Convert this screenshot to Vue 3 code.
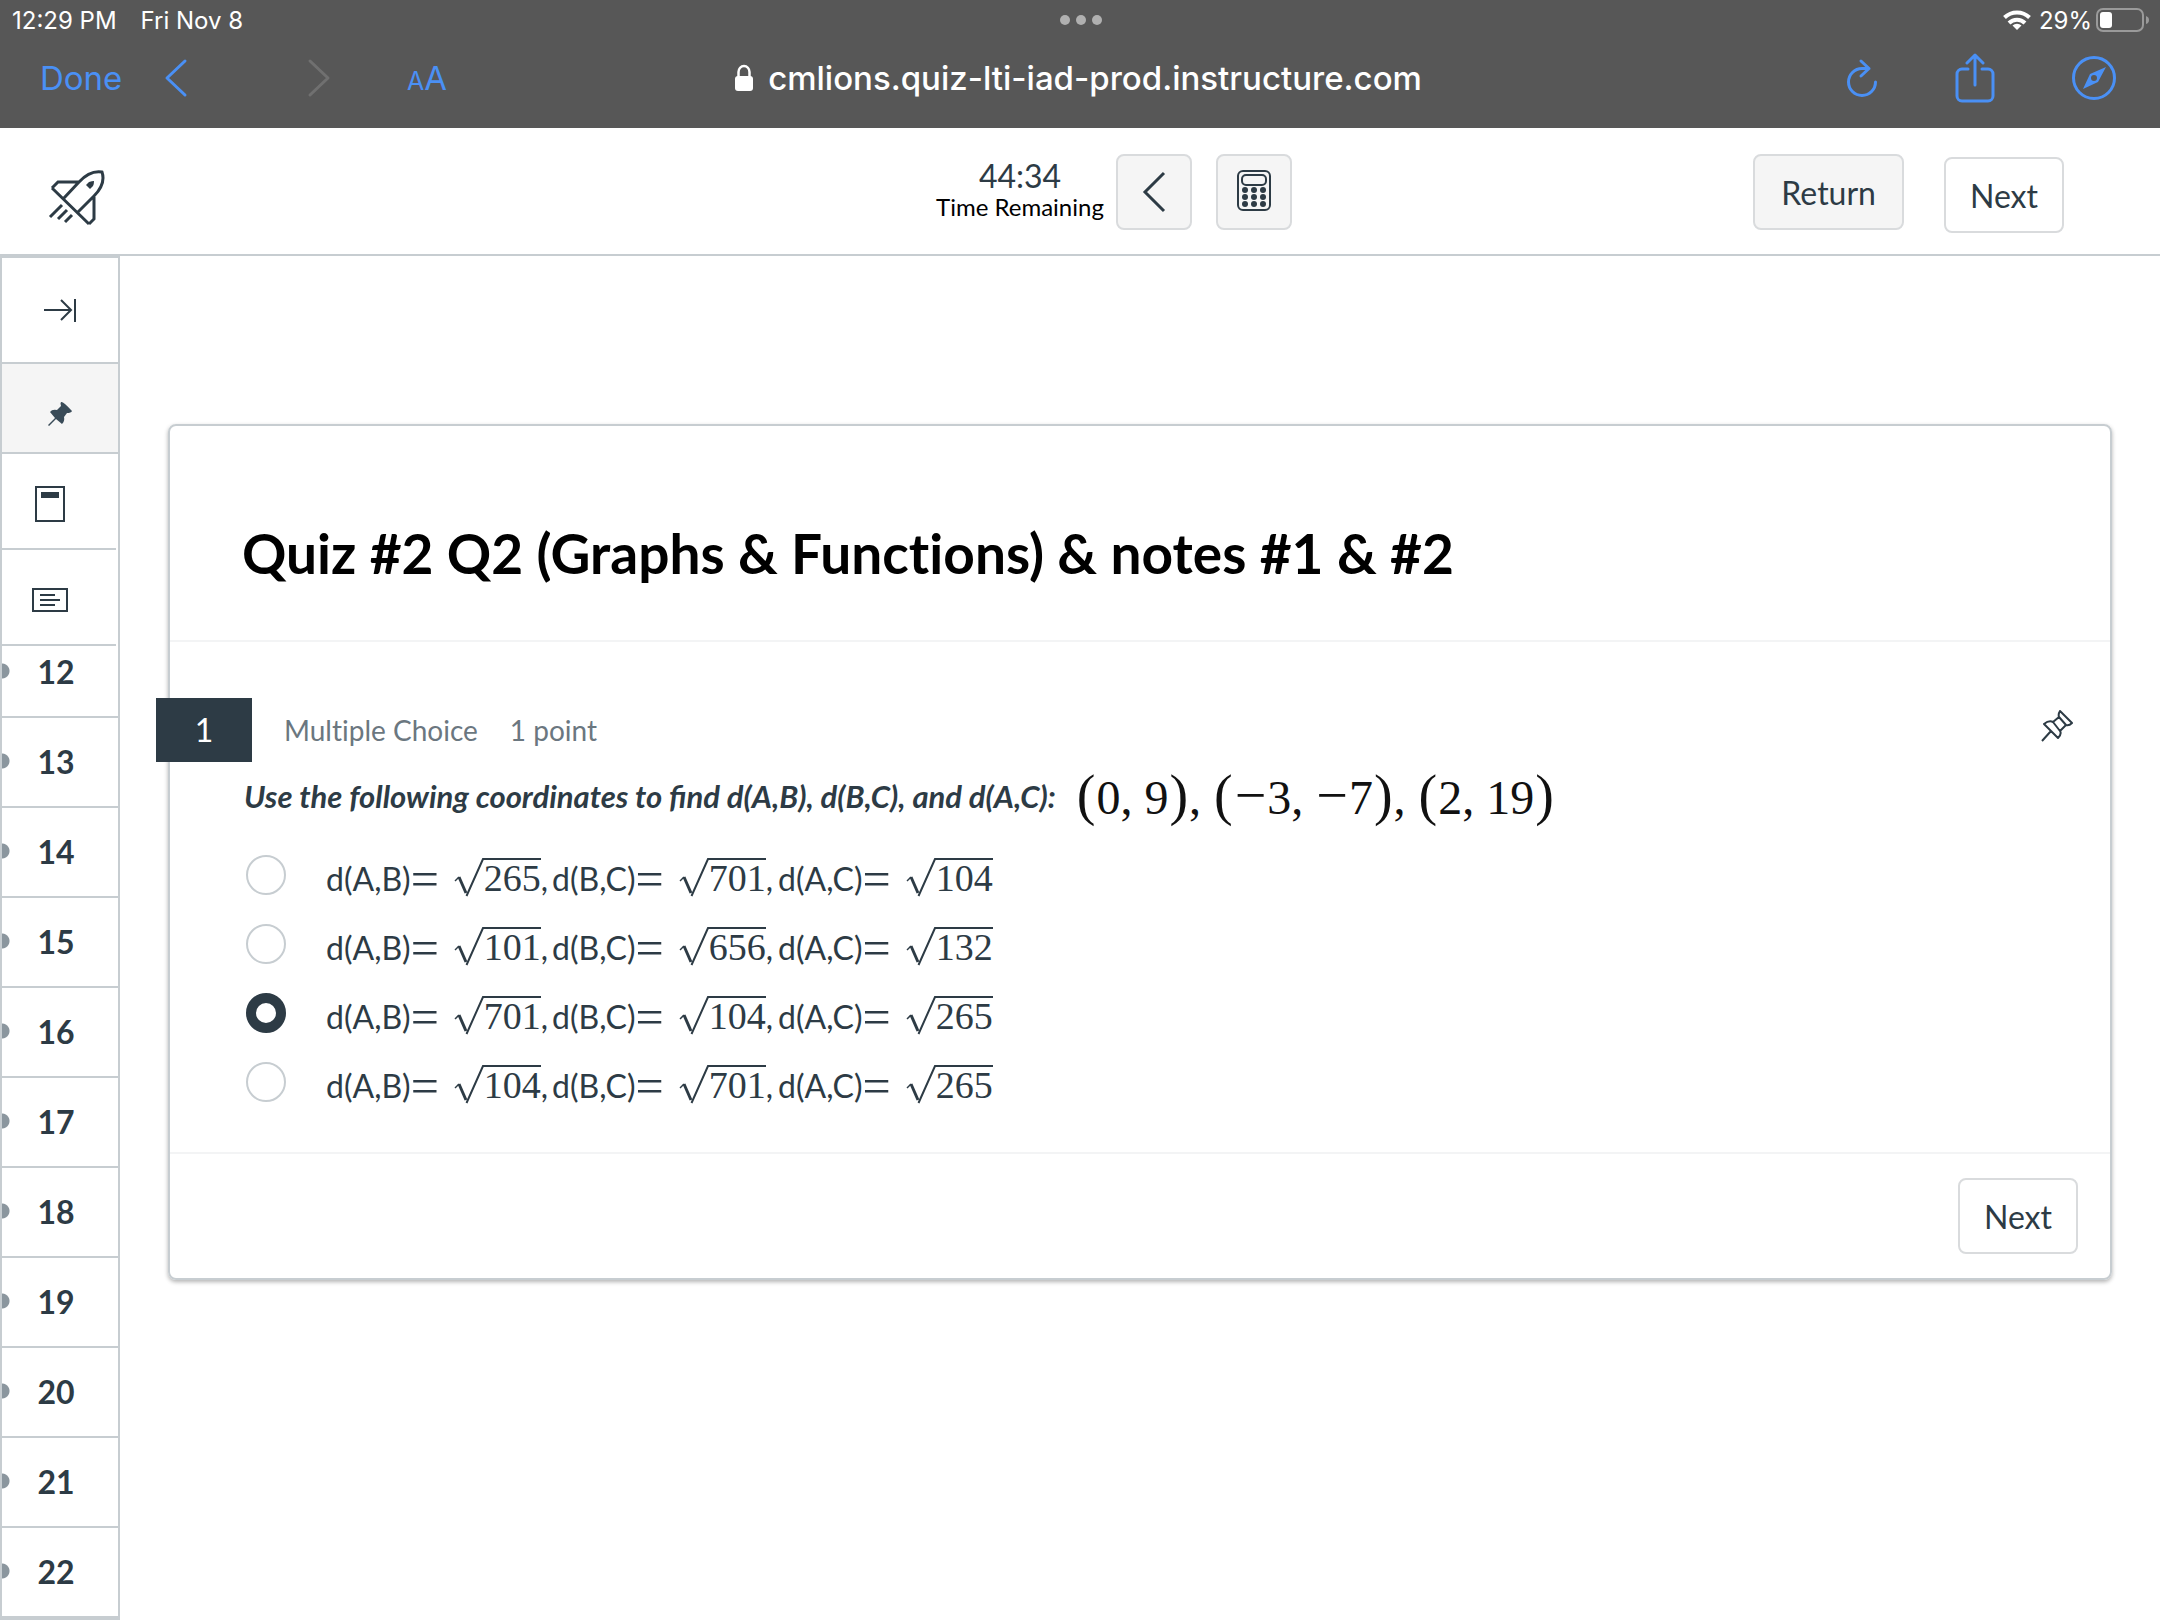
<script setup>
import { ref } from 'vue'

const choice = ref(2)
const questions = [12, 13, 14, 15, 16, 17, 18, 19, 20, 21, 22]
const answers = [
  [265, 701, 104],
  [101, 656, 132],
  [701, 104, 265],
  [104, 701, 265],
].map((roots) => ['d(A,B)', 'd(B,C)', 'd(A,C)'].map((name, i) => ({ name, root: roots[i] })))
const keys = [0, 1, 2].flatMap((r) => [0, 1, 2].map((c) => ({ x: 11 + c * 9, y: 20 + r * 7 })))
</script>

<template>
  <div class="page">
    <div class="browser">
      <div class="status">
        <div class="side">
          <span>12:29 PM</span>
          <span>Fri Nov 8</span>
        </div>
        <div class="dots"><i></i><i></i><i></i></div>
        <div class="side end">
          <svg width="28" height="22" viewBox="0 0 28 22" fill="none" stroke="#fff" stroke-width="4">
            <path d="M1.5 8.5a18 18 0 0 1 25 0M6 14a11.500 11.500 0 0 1 16 0" />
            <path d="M14 21l-4.500-4.500a6.500 6.500 0 0 1 9 0z" fill="#fff" stroke="none" />
          </svg>
          <span class="charge">29%</span>
          <svg width="54" height="24" viewBox="0 0 54 24">
            <rect x="1" y="1" width="46" height="22" rx="6" fill="none" stroke="#9a9a9a" stroke-width="2" />
            <rect x="4" y="4" width="12" height="16" rx="3" fill="#fff" />
            <path d="M50 8q3 1 3 4t-3 4z" fill="#9a9a9a" />
          </svg>
        </div>
      </div>
      <div class="toolbar">
        <div class="tools">
          <button class="plain done">Done</button>
          <button class="plain back" aria-label="Back">
            <svg width="24" height="40" viewBox="0 0 24 40" fill="none" stroke="#4a90f5" stroke-width="3" stroke-linecap="round" stroke-linejoin="round"><path d="M21 3L3 20l18 17" /></svg>
          </button>
          <button class="plain forward" aria-label="Forward">
            <svg width="24" height="40" viewBox="0 0 24 40" fill="none" stroke="#707070" stroke-width="3" stroke-linecap="round" stroke-linejoin="round"><path d="M3 3l18 17L3 37" /></svg>
          </button>
          <button class="plain size"><small>A</small>A</button>
        </div>
        <div class="address">
          <svg width="20" height="28" viewBox="0 0 20 28"><path d="M4.500 13V8a5.500 6 0 0 1 11 0v5" fill="none" stroke="#fff" stroke-width="2.500" /><rect x="1" y="12" width="18" height="15" rx="3" fill="#fff" /></svg>
          <span>cmlions.quiz-lti-iad-prod.instructure.com</span>
        </div>
        <div class="tools end">
          <button class="plain" aria-label="Reload">
            <svg width="32" height="40" viewBox="0 0 32 40" fill="none" stroke="#4a90f5" stroke-width="3" stroke-linecap="round" stroke-linejoin="round"><path d="M29.500 24A13.500 13.500 0 1 1 16 10.500h7M15 3l8 7.500-8 7.500" /></svg>
          </button>
          <button class="plain" aria-label="Share">
            <svg width="40" height="50" viewBox="0 0 40 50" fill="none" stroke="#4a90f5" stroke-width="3" stroke-linecap="round" stroke-linejoin="round"><path d="M13 16H7a5 5 0 0 0-5 5v22a5 5 0 0 0 5 5h26a5 5 0 0 0 5-5V21a5 5 0 0 0-5-5h-6M20 32V3M12 10l8-8 8 8" /></svg>
          </button>
          <button class="plain" aria-label="Open in browser">
            <svg width="44" height="44" viewBox="0 0 44 44"><circle cx="22" cy="22" r="20.500" fill="none" stroke="#4a90f5" stroke-width="3" /><path fill="#4a90f5" fill-rule="evenodd" d="M34 11L26 26 11 33l7-15zM22 19a3 3 0 1 0 0 6 3 3 0 0 0 0-6z" /></svg>
          </button>
        </div>
      </div>
    </div>

    <header class="header">
      <div class="brand">
        <svg width="58" height="58" viewBox="0 0 58 58" fill="none" stroke="#2d3b45" stroke-width="3">
          <path d="M16 30L31 14Q42 2 54 4Q58 16 46 28L30 44M4 20l37 36M4 20l6-6h21M41 56l5-5V29M2 49l12-12M10 51l9-9M17 54l7-7" />
          <path d="M38 17l3-3q3-1 5-1 0 3-1 5l-3 3z" fill="#2d3b45" stroke="none" />
        </svg>
      </div>
      <div class="center">
        <div class="timer"><strong>44:34</strong><span>Time Remaining</span></div>
        <button class="btn grey square" aria-label="Hide timer">
          <svg width="24" height="42" viewBox="0 0 24 42" fill="none" stroke="#2d3b45" stroke-width="3"><path d="M22 2L3 21l19 19" /></svg>
        </button>
        <button class="btn grey square" aria-label="Calculator">
          <svg width="40" height="44" viewBox="0 0 40 44" fill="none" stroke="#2d3b45" stroke-width="2">
            <rect x="4" y="1" width="32" height="39" rx="5" /><rect x="8" y="5" width="24" height="10" rx="4" />
            <circle v-for="k in keys" :key="k.x + '-' + k.y" :cx="k.x" :cy="k.y" r="3" fill="#2d3b45" stroke="none" />
          </svg>
        </button>
      </div>
      <div class="actions">
        <button class="btn grey">Return</button>
        <button class="btn next">Next</button>
      </div>
    </header>

    <div class="body">
      <nav class="sidebar" aria-label="Questions">
        <button class="cell collapse" aria-label="Collapse">
          <svg width="34" height="26" viewBox="0 0 34 26" fill="none" stroke="#2d3b45" stroke-width="2"><path d="M1 13h27M18 3l10 10-10 10M32 2v23" /></svg>
        </button>
        <button class="cell pinned" aria-label="Pinned questions">
          <svg width="26" height="26" viewBox="0 0 26 26" fill="#394b58"><path d="M14 1Q16 0 25 10q-1 2-5 2l-3 4q1 4-2 7L9 18l-7 7-1-1 7-7-5-6q2-3 7-2l4-4q-1-3 0-4z" /></svg>
        </button>
        <button class="cell small" aria-label="Quiz cover">
          <svg width="32" height="38" viewBox="0 0 32 38"><rect x="2" y="2" width="28" height="34" fill="none" stroke="#2d3b45" stroke-width="2" /><path d="M7 7h18v6H7z" fill="#2d3b45" /></svg>
        </button>
        <button class="cell small" aria-label="Instructions">
          <svg width="38" height="26" viewBox="0 0 38 26" fill="none" stroke="#2d3b45" stroke-width="2"><rect x="2" y="2" width="34" height="22" /><path d="M9 8h15M9 13h20M9 18h15" /></svg>
        </button>
        <div class="scroller">
          <ol>
            <li v-for="n in questions" :key="n"><a href="#">{{ n }}</a></li>
          </ol>
        </div>
      </nav>

      <main class="main">
        <section class="card">
          <h1>Quiz #2 Q2 (Graphs &amp; Functions) &amp; notes #1 &amp; #2</h1>
          <div class="question">
            <div class="meta">
              <span class="badge">1</span>
              <span class="kind">Multiple Choice</span>
              <span>1 point</span>
              <button class="plain pin" aria-label="Pin question">
                <svg width="32" height="32" viewBox="0 0 32 32" fill="none" stroke="#2d3b45" stroke-width="2" stroke-linejoin="round"><path d="M19 1l12 12q-3 3-6 2L18 7q-1-3 1-6zM18 7l-6 5M25 15l-6 6M12 12q-4-2-9 2l14 14q4-4 2-7zM10 21L1 31" /></svg>
              </button>
            </div>
            <p class="prompt" id="prompt">
              <span class="ask">Use the following coordinates to find d(A,B), d(B,C), and d(A,C):</span>
              <span class="points"><b>(</b>0, 9<b>)</b>, <b>(</b><b>−</b>3, <b>−</b>7<b>)</b>, <b>(</b>2, 19<b>)</b></span>
            </p>
            <div class="answers" role="radiogroup" aria-labelledby="prompt">
              <label v-for="(answer, i) in answers" :key="i">
                <input type="radio" name="answer" :value="i" v-model="choice" />
                <span class="formula">
                  <span v-for="(term, t) in answer" :key="term.name" class="term">
                    <span>{{ term.name }}</span><span class="equals">=</span>
                    <span class="sqrt">
                      <svg width="30" height="39" viewBox="0 0 30 39" fill="none" stroke="#2d3b45"><path d="M1 23l4-4" stroke-width="1.500" /><path d="M5 19l7 16" stroke-width="3" /><path d="M12.500 38L29 1h1" stroke-width="2" /></svg>
                      <span class="root">{{ term.root }}</span>
                    </span><span v-if="t < 2">,</span>
                  </span>
                </span>
              </label>
            </div>
          </div>
          <footer><button class="btn">Next</button></footer>
        </section>
      </main>
    </div>
  </div>
</template>

<style>
body {
  margin: 0;
  background: #fff;
}
</style>

<style scoped>
.page {
  height: 100vh;
  display: flex;
  flex-direction: column;
  overflow: hidden;
  font-family: Lato, sans-serif;
  color: #2d3b45;
}
button {
  font: inherit;
  color: inherit;
  margin: 0;
}
svg {
  display: block;
  flex: none;
}
.plain {
  border: 0;
  padding: 0;
  background: none;
}
.browser {
  flex: none;
  height: 128px;
  background: #575757;
  color: #fff;
  font-family: Inter, sans-serif;
}
.status {
  display: flex;
  align-items: center;
  height: 40px;
  padding: 0 10px 0 12px;
  font-size: 24px;
}
.side {
  flex: 1;
  display: flex;
  align-items: center;
  gap: 24px;
}
.side.end {
  justify-content: flex-end;
  gap: 4px;
}
.charge {
  margin-left: 4px;
}
.dots {
  display: flex;
  gap: 6px;
}
.dots i {
  width: 10px;
  height: 10px;
  border-radius: 50%;
  background: #b0b0b0;
}
.toolbar {
  display: flex;
  align-items: center;
  height: 76px;
  padding: 0 44px 0 40px;
}
.tools {
  flex: 1;
  display: flex;
  align-items: center;
  color: #4a90f5;
}
.tools.end {
  justify-content: flex-end;
  gap: 77px;
}
.done {
  width: 80px;
  font-size: 33px;
}
.back {
  margin-left: 44px;
}
.forward {
  margin-left: 119px;
}
.size {
  margin-left: 76px;
  font-size: 33px;
}
.size small {
  font-size: 25px;
}
.address {
  display: flex;
  align-items: center;
  gap: 14px;
  font-size: 33px;
  font-weight: 500;
}
.header {
  flex: none;
  display: flex;
  align-items: flex-start;
  height: 126px;
  padding: 0 96px 0 48px;
  border-bottom: 2px solid #c7cdd1;
}
.brand {
  flex: 1 1 116px;
  padding-top: 40px;
}
.center {
  display: flex;
  padding-top: 26px;
}
.timer {
  display: flex;
  flex-direction: column;
  align-items: center;
  width: 168px;
  margin-right: 12px;
}
.timer strong {
  font-weight: 400;
  font-size: 32px;
  line-height: 44px;
}
.timer span {
  color: #000;
  font-size: 24px;
  line-height: 18px;
  white-space: nowrap;
}
.btn {
  display: flex;
  align-items: center;
  justify-content: center;
  box-sizing: border-box;
  height: 76px;
  padding: 0 24px;
  border: 2px solid #d9dbdd;
  border-radius: 8px;
  background: #fff;
  font-size: 32px;
}
.grey {
  padding: 0 26px;
  background: #f5f5f5;
}
.square {
  width: 76px;
  padding: 0;
}
.square + .square {
  margin-left: 24px;
}
.actions {
  flex: 1 1 0;
  display: flex;
  justify-content: flex-end;
  gap: 40px;
  padding-top: 26px;
}
.next {
  margin-top: 3px;
}
.body {
  flex: 1;
  min-height: 0;
  display: flex;
}
.sidebar {
  flex: none;
  display: flex;
  flex-direction: column;
  box-sizing: border-box;
  width: 120px;
  border: 2px solid #c7cdd1;
  border-bottom-width: 4px;
}
.cell {
  flex: none;
  display: flex;
  align-items: center;
  justify-content: center;
  box-sizing: border-box;
  width: 100%;
  height: 96px;
  padding: 0;
  border: 0;
  border-bottom: 2px solid #c7cdd1;
  background: #fff;
}
.collapse {
  height: 106px;
}
.pinned {
  height: 90px;
  padding-top: 12px;
  background: #f5f5f5;
}
.small {
  width: 114px;
  padding: 6px 18px 0 0;
}
.scroller {
  flex: 1;
  min-height: 0;
  overflow: hidden;
}
ol {
  margin: -18px 0 0;
  padding: 0;
  list-style: none;
}
li a {
  display: flex;
  align-items: center;
  justify-content: center;
  box-sizing: border-box;
  height: 90px;
  padding: 0 8px 2px 0;
  border-bottom: 2px solid #c7cdd1;
  color: inherit;
  font-size: 32px;
  font-weight: 700;
  text-decoration: none;
  background: radial-gradient(circle at 0 43px, #8b969e 7px, transparent 8px);
}
.main {
  flex: 1;
  padding: 168px 48px 0;
}
.card {
  border: 2px solid #c7cdd1;
  border-radius: 8px;
  box-shadow: 0 2px 4px rgba(0, 0, 0, 0.3);
}
h1 {
  margin: 0;
  padding: 97px 72px 57px;
  border-bottom: 2px solid #f3f4f5;
  color: #000;
  font-size: 55px;
  font-variant-ligatures: none;
  line-height: 60px;
}
.question {
  padding: 56px 37px 0 74px;
}
.meta {
  display: flex;
  align-items: center;
  gap: 32px;
  height: 64px;
  margin-left: -88px;
  color: #6b7780;
  font-size: 28px;
  font-variant-ligatures: none;
}
.badge {
  width: 96px;
  background: #2d3b45;
  color: #fff;
  font-size: 32px;
  line-height: 64px;
  text-align: center;
}
.pin {
  margin-left: auto;
  padding-bottom: 8px;
}
.prompt {
  display: flex;
  align-items: center;
  gap: 20px;
  height: 72px;
  margin: 0;
  font-size: 31px;
  font-weight: 700;
  font-style: italic;
  line-height: 72px;
  white-space: nowrap;
}
.ask {
  padding-bottom: 4px;
}
.points {
  color: #111;
  font-family: "Liberation Serif", serif;
  font-size: 48px;
  font-weight: 400;
  font-style: normal;
}
.points b {
  padding: 0 1px;
  font-size: 56px;
  font-weight: 400;
  line-height: 48px;
}
.answers {
  padding: 6px 0 36px;
}
.answers label {
  display: flex;
  align-items: center;
  height: 69px;
}
.answers input {
  appearance: none;
  box-sizing: border-box;
  width: 40px;
  height: 40px;
  margin: 0 40px 0 2px;
  border: 2px solid #c7cdd1;
  border-radius: 50%;
  background: #fff;
}
.answers input:checked {
  border: 10px solid #2d3b45;
}
.formula,
.term {
  display: flex;
  align-items: baseline;
}
.formula {
  padding-top: 8px;
  font-size: 32px;
  line-height: 40px;
}
.term {
  width: 226px;
}
.equals {
  align-self: center;
  font-family: "Liberation Serif", serif;
  font-size: 50px;
}
.sqrt {
  display: flex;
  align-items: flex-start;
  margin-left: 15px;
}
.root {
  align-self: baseline;
  border-top: 2px solid #2d3b45;
  font-family: "Liberation Serif", serif;
  font-size: 38px;
  line-height: 36px;
}
footer {
  display: flex;
  justify-content: flex-end;
  padding: 24px 32px;
  border-top: 2px solid #f3f4f5;
}
</style>
